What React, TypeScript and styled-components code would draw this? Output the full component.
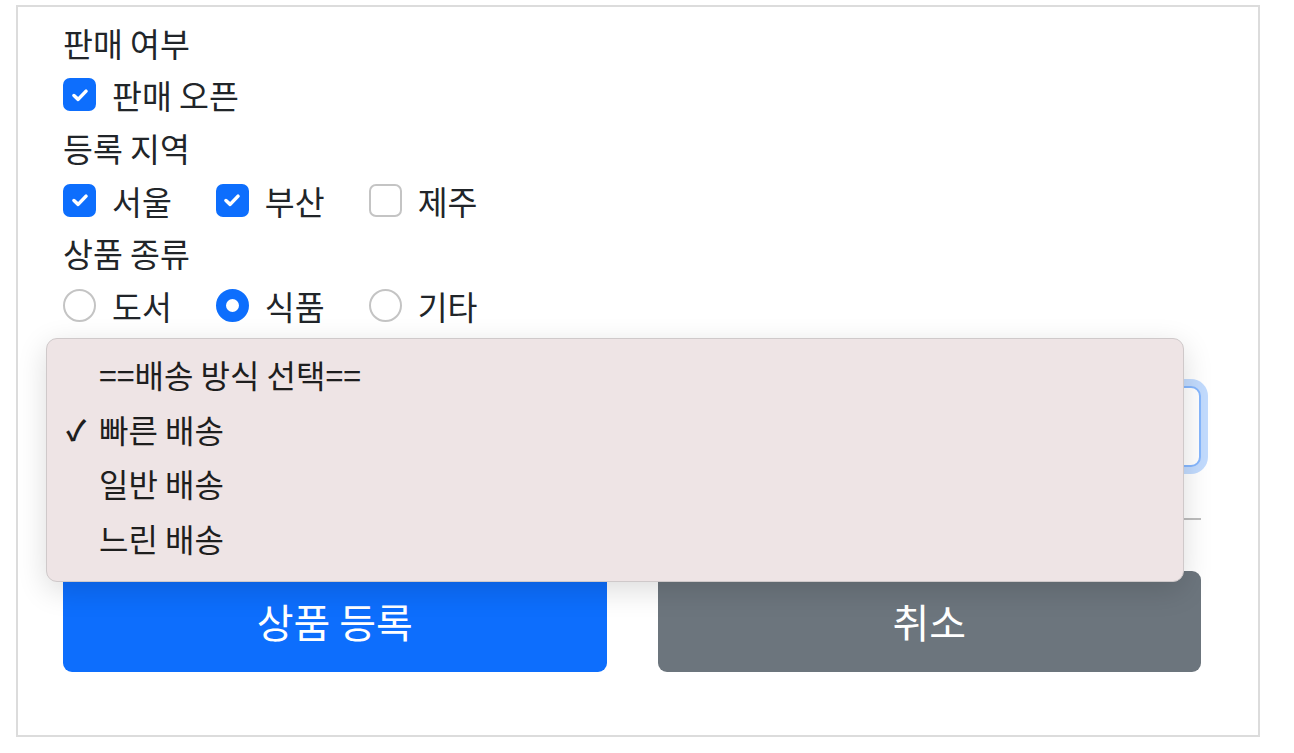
import React from 'react';
import styled, { createGlobalStyle } from 'styled-components';

const GlobalStyle = createGlobalStyle`
  html, body {
    margin: 0;
    padding: 0;
    background: #fff;
  }
  body {
    font-family: "Noto Sans CJK KR", "Noto Sans", sans-serif;
    color: #212529;
  }
`;

const regions = [
  { name: '서울', checked: true },
  { name: '부산', checked: true },
  { name: '제주', checked: false },
];

const kinds = [
  { name: '도서', checked: false },
  { name: '식품', checked: true },
  { name: '기타', checked: false },
];

const shipping = [
  { name: '==배송 방식 선택==', selected: false },
  { name: '빠른 배송', selected: true },
  { name: '일반 배송', selected: false },
  { name: '느린 배송', selected: false },
];

const CheckBox: React.FC<{ checked: boolean }> = ({ checked }) => (
  <Box $checked={checked}>
    {checked && (
      <svg width="22" height="22" viewBox="0 0 20 20">
        <path d="M4.5 10.5 L8.3 14 L15.5 6.5" fill="none" stroke="#fff" strokeWidth="3.2" strokeLinecap="round" strokeLinejoin="round" />
      </svg>
    )}
  </Box>
);

const App: React.FC = () => {
  return (
    <>
      <GlobalStyle />
      <Container>
        <Form>
          <Label>판매 여부</Label>
          <Row>
            <Option>
              <CheckBox checked />
              <OptionText>판매 오픈</OptionText>
            </Option>
          </Row>

          <Label>등록 지역</Label>
          <Row>
            {regions.map(r => (
              <Option key={r.name}>
                <CheckBox checked={r.checked} />
                <OptionText>{r.name}</OptionText>
              </Option>
            ))}
          </Row>

          <Label>상품 종류</Label>
          <Row>
            {kinds.map(k => (
              <Option key={k.name}>
                <Radio $checked={k.checked} />
                <OptionText>{k.name}</OptionText>
              </Option>
            ))}
          </Row>

          <SelectBox />
          <Divider />

          <ButtonRow>
            <Button $variant="primary">상품 등록</Button>
            <Button $variant="secondary">취소</Button>
          </ButtonRow>
        </Form>

        {/* 열린 select 팝업 */}
        <Popup>
          {shipping.map(s => (
            <PopupItem key={s.name}>
              <Tick>{s.selected ? '✓' : ''}</Tick>
              {s.name}
            </PopupItem>
          ))}
        </Popup>
      </Container>
    </>
  );
};

export default App;

const Container = styled.div`
  position: relative;
  box-sizing: border-box;
  margin: 5px 0 0 16px;
  width: 1244px;
  height: 732px;
  border: 2px solid #dcdcdc;
  padding: 9px 0 0 45px;
`;

const Form = styled.div`
  width: 1138px;
  display: flex;
  flex-direction: column;
`;

const Label = styled.div`
  height: 52.6px;
  display: flex;
  align-items: center;
  font-size: 32.5px;
`;

const Row = styled.div`
  height: 52.6px;
  display: flex;
  align-items: center;
  gap: 44px;
`;

const Option = styled.label`
  display: flex;
  align-items: center;
  gap: 16px;
`;

const OptionText = styled.span`
  font-size: 32.5px;
`;

const Box = styled.span<{ $checked: boolean }>`
  box-sizing: border-box;
  width: 33px;
  height: 33px;
  border-radius: 7px;
  display: flex;
  align-items: center;
  justify-content: center;
  background: ${p => (p.$checked ? '#0d6efd' : '#fff')};
  border: 2px solid ${p => (p.$checked ? '#0d6efd' : '#c4c4c4')};
`;

const Radio = styled.span<{ $checked: boolean }>`
  box-sizing: border-box;
  width: 33px;
  height: 33px;
  border-radius: 50%;
  background: #fff;
  border: ${p => (p.$checked ? '10px solid #0d6efd' : '2px solid #c4c4c4')};
`;

const SelectBox = styled.div`
  box-sizing: border-box;
  margin-top: 54px;
  height: 81px;
  border: 2px solid #86b7fe;
  border-radius: 10px;
  box-shadow: 0 0 0 7px rgba(13, 110, 253, 0.25);
  background: #fff;
`;

const Divider = styled.hr`
  margin: 51px 0 0;
  border: none;
  border-top: 2px solid #bdbdbd;
  height: 0;
`;

const ButtonRow = styled.div`
  margin-top: 51px;
  display: grid;
  grid-template-columns: 1fr 1fr;
  gap: 51px;
`;

const Button = styled.button<{ $variant: 'primary' | 'secondary' }>`
  height: 101px;
  border: none;
  border-radius: 9px;
  font-family: "Noto Sans CJK KR", "Noto Sans", sans-serif;
  font-size: 40px;
  color: #fff;
  background: ${p => (p.$variant === 'primary' ? '#0d6efd' : '#6c757d')};
  cursor: pointer;
`;

const Popup = styled.div`
  position: absolute;
  left: 28px;
  top: 331px;
  width: 1138px;
  box-sizing: border-box;
  padding: 8px 0 16px;
  background: #eee4e5;
  border: 1px solid #cfc9ca;
  border-radius: 11px;
  box-shadow: 0 8px 30px rgba(0, 0, 0, 0.14);
`;

const PopupItem = styled.div`
  height: 54.5px;
  display: flex;
  align-items: center;
  font-size: 32px;
  color: #1e1e1e;
`;

const Tick = styled.span`
  width: 52px;
  padding-left: 19px;
  box-sizing: border-box;
  font-size: 28px;
  font-weight: 700;
`;
